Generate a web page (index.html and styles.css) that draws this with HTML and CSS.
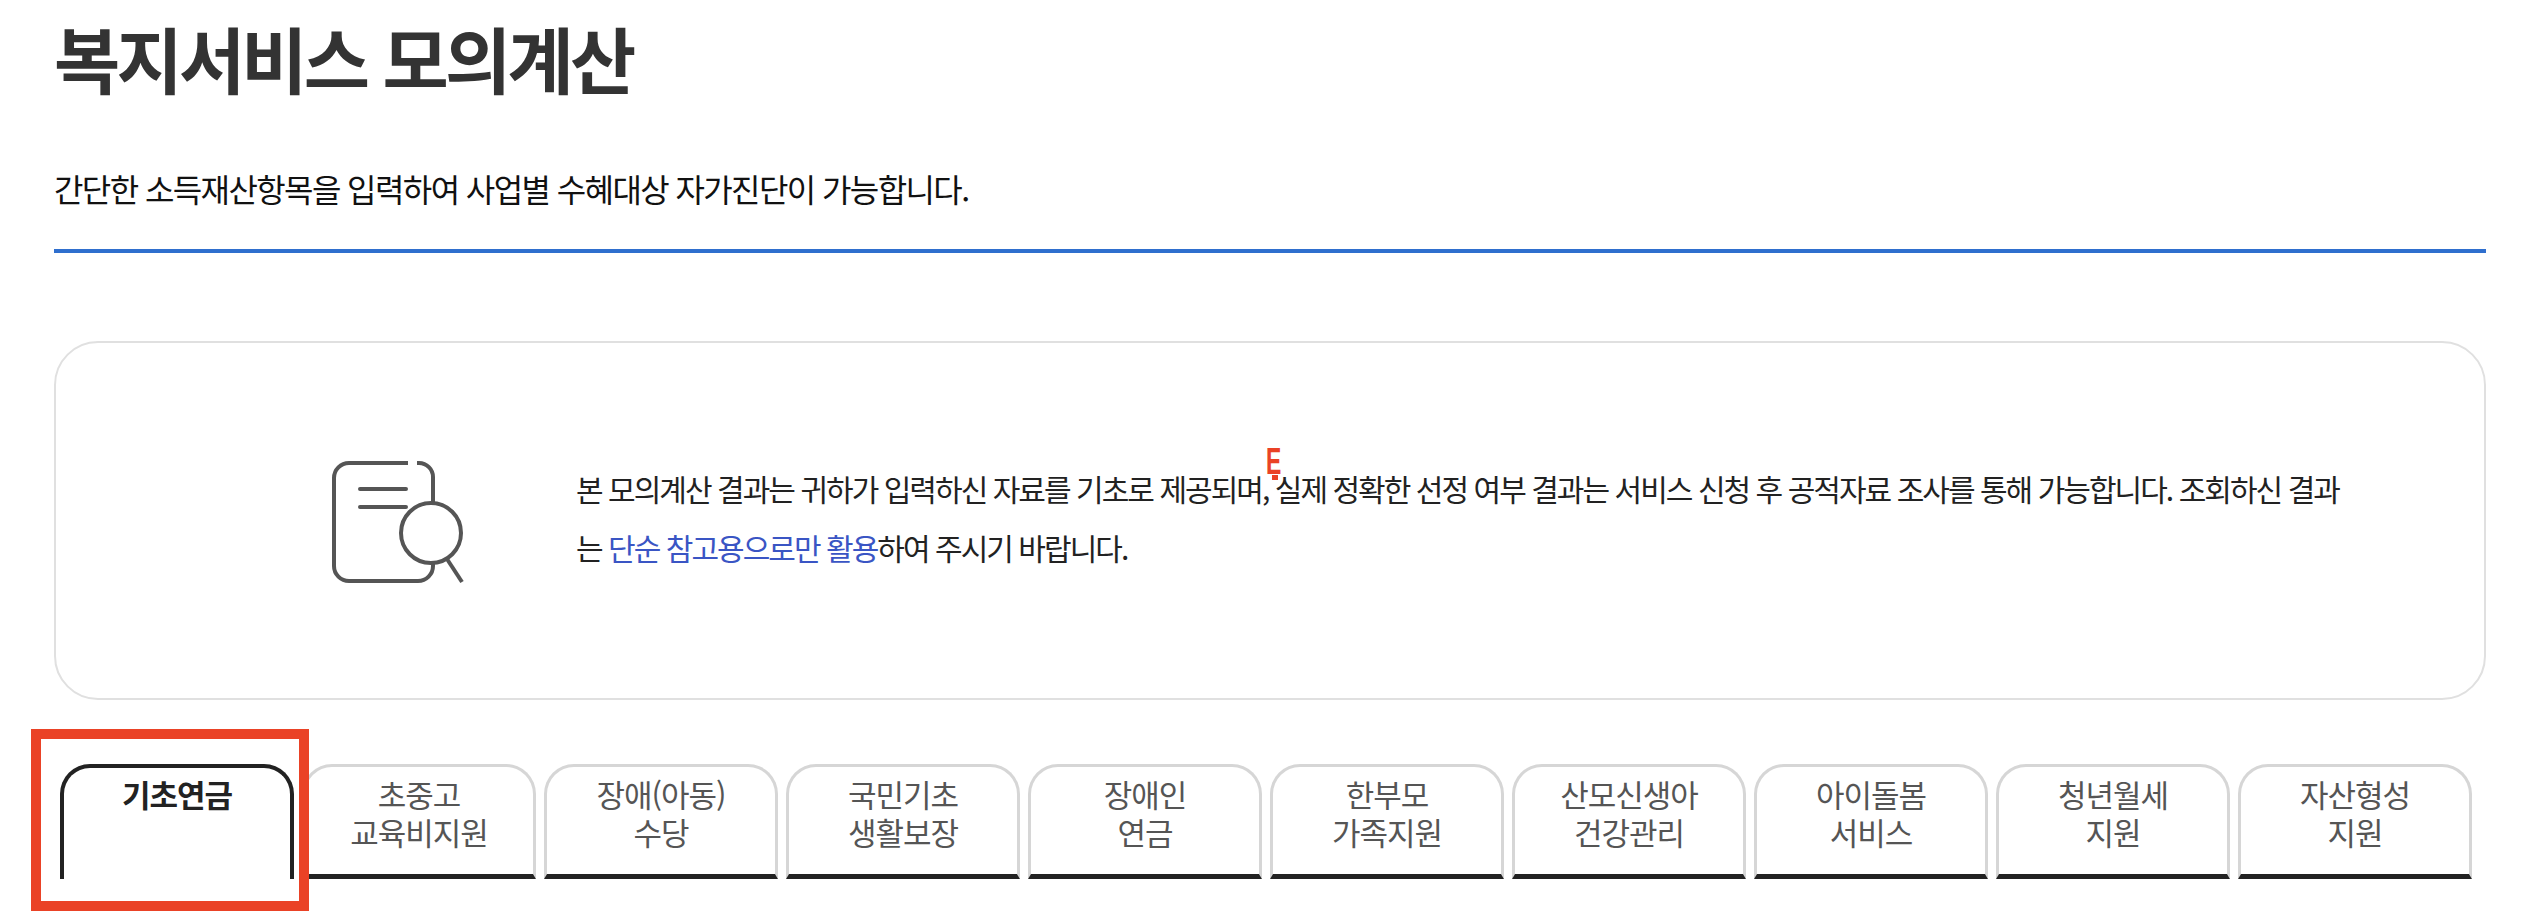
FILE: index.html
```html
<!DOCTYPE html>
<html lang="ko">
<head>
  <meta charset="UTF-8">
  <meta name="viewport" content="width=device-width, initial-scale=1.0">
  <title>복지서비스 모의계산</title>
  <link rel="stylesheet" href="styles.css">
</head>
<body>
  <div class="container">
    <header class="page-head">
      <h1>복지서비스 모의계산</h1>
      <p class="lead">간단한 소득재산항목을 입력하여 사업별 수혜대상 자가진단이 가능합니다.</p>
    </header>

    <section class="notice">
      <svg class="notice-icon" width="140" height="130" viewBox="0 0 140 130" fill="none" stroke="#555" stroke-width="4" stroke-linecap="butt">
        <path d="M79 6H20A15 15 0 0 0 5 21V109A15 15 0 0 0 20 124H89A15 15 0 0 0 104 109V105"/>
        <path d="M88 6H90A14 14 0 0 1 104 20V46"/>
        <path d="M31 32H77M31 50H77" stroke-linecap="round"/>
        <circle cx="102" cy="76" r="30"/>
        <path d="M118 102L133 125"/>
      </svg>
      <p class="notice-text">본 모의계산 결과는 귀하가 입력하신 자료를 기초로 제공되며, 실제 정확한 선정 여부 결과는 서비스 신청 후 공적자료 조사를 통해 가능합니다. 조회하신 결과는 <span class="accent">단순 참고용으로만 활용</span>하여 주시기 바랍니다.</p>
      <span class="marker">E</span>
      <span class="marker-dot"></span>
    </section>

    <nav class="tabs">
      <a class="tab active">기초연금<span class="highlight"></span></a>
      <a class="tab">초중고<br>교육비지원</a>
      <a class="tab">장애(아동)<br>수당</a>
      <a class="tab">국민기초<br>생활보장</a>
      <a class="tab">장애인<br>연금</a>
      <a class="tab">한부모<br>가족지원</a>
      <a class="tab">산모신생아<br>건강관리</a>
      <a class="tab">아이돌봄<br>서비스</a>
      <a class="tab">청년월세<br>지원</a>
      <a class="tab">자산형성<br>지원</a>
    </nav>
  </div>
</body>
</html>
```

FILE: styles.css
```css
* {
  box-sizing: border-box;
}

html,
body {
  height: 100%;
}

body {
  margin: 0;
  background: #fff;
  font-family: "Noto Sans CJK KR", "Noto Sans", sans-serif;
  color: #222;
  overflow: hidden;
}

.container {
  width: 2432px;
  margin-left: 54px;
}

.page-head {
  height: 253px;
  border-bottom: 4px solid #2f6fce;
}

h1 {
  margin: 0;
  padding-top: 8px;
  font-size: 72px;
  line-height: 98px;
  font-weight: 700;
  letter-spacing: -3.8px;
  color: #333;
}

.lead {
  margin: 0;
  padding-top: 60px;
  font-size: 32px;
  line-height: 44px;
  letter-spacing: -1.6px;
  color: #111;
}

.notice {
  position: relative;
  display: flex;
  align-items: center;
  height: 359px;
  margin-top: 88px;
  padding-left: 273px;
  border: 2px solid #e0e0e0;
  border-radius: 44px;
}

.notice-icon {
  flex: none;
  margin-top: 2px;
}

.notice-text {
  width: 1775px;
  margin: 0 0 6px 107px;
  font-size: 30px;
  line-height: 59px;
  letter-spacing: -1.965px;
  color: #222;
}

.accent {
  color: #3a55c4;
}

.marker {
  position: absolute;
  left: 1210px;
  top: 101px;
  font-family: "Liberation Sans", sans-serif;
  font-size: 37px;
  font-weight: 700;
  line-height: 36px;
  color: #ea4226;
  transform: scaleX(0.62);
  transform-origin: left top;
}

.marker-dot {
  position: absolute;
  left: 1216px;
  top: 132px;
  width: 6px;
  height: 5px;
  background: #ea4226;
}

.tabs {
  display: flex;
  gap: 8px;
  margin-top: 64px;
  padding-left: 6px;
}

.tab {
  flex: none;
  width: 234px;
  height: 115px;
  padding-top: 8px;
  border: 3px solid #d6d6d6;
  border-bottom: 5px solid #222;
  border-radius: 30px 30px 0 0;
  font-size: 31px;
  line-height: 38px;
  letter-spacing: -1px;
  text-align: center;
  color: #555;
}

.tab.active {
  position: relative;
  border: 4px solid #222;
  border-bottom: 0;
  padding-top: 7px;
  font-weight: 700;
  color: #222;
}

.highlight {
  position: absolute;
  left: -33px;
  top: -39px;
  width: 278px;
  height: 182px;
  border: 10px solid #ea4226;
  z-index: 2;
}
```
